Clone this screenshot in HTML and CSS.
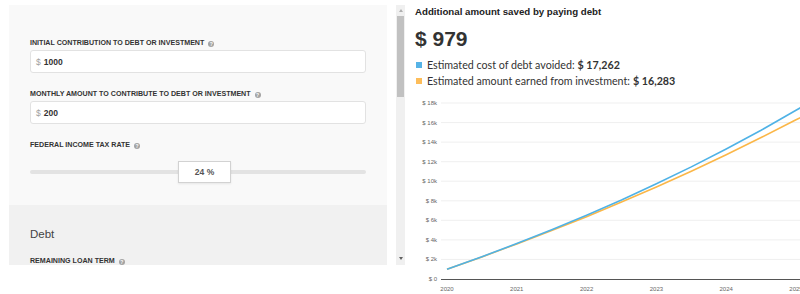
FILE: index.html
```html
<!DOCTYPE html>
<html>
  <head>
    <meta charset="utf-8">
    <meta name="viewport" content="width=device-width, initial-scale=1">
    <title>Pay debt or invest</title>
    <link rel="stylesheet" href="styles.css">
  </head>
  <body>
    <div class="page">
      <div class="inputs">
        <div class="panel">
          <section class="general">
            <label class="label">Initial contribution to debt or investment <span class="help">?</span></label>
            <div class="field"><span class="prefix">$</span><span class="value">1000</span></div>

            <label class="label">Monthly amount to contribute to debt or investment <span class="help">?</span></label>
            <div class="field"><span class="prefix">$</span><span class="value">200</span></div>

            <label class="label">Federal income tax rate <span class="help">?</span></label>
            <div class="slider">
              <div class="handle">24 %</div>
            </div>
          </section>

          <section class="debt">
            <h2>Debt</h2>
            <label class="label">Remaining loan term <span class="help">?</span></label>
          </section>
        </div>

        <div class="scrollbar">
          <span class="arrow up"></span>
          <span class="thumb"></span>
          <span class="arrow down"></span>
        </div>
      </div>

      <div class="results">
        <h1>Additional amount saved by paying debt</h1>
        <p class="total">$ 979</p>
        <ul class="legend">
          <li><span class="swatch debt-color"></span>Estimated cost of debt avoided: <b>$ 17,262</b></li>
          <li><span class="swatch invest-color"></span>Estimated amount earned from investment: <b>$ 16,283</b></li>
        </ul>

        <svg class="chart" width="385" height="204" viewBox="0 0 385 204">
          <g class="grid">
            <line x1="26" x2="385" y1="13" y2="13"/>
            <line x1="26" x2="385" y1="32.6" y2="32.6"/>
            <line x1="26" x2="385" y1="52.1" y2="52.1"/>
            <line x1="26" x2="385" y1="71.7" y2="71.7"/>
            <line x1="26" x2="385" y1="91.2" y2="91.2"/>
            <line x1="26" x2="385" y1="110.8" y2="110.8"/>
            <line x1="26" x2="385" y1="130.3" y2="130.3"/>
            <line x1="26" x2="385" y1="149.9" y2="149.9"/>
            <line x1="26" x2="385" y1="169.4" y2="169.4"/>
          </g>
          <line class="axis" x1="26" x2="385" y1="189.5" y2="189.5"/>

          <g class="y-labels">
            <text x="22" y="15">$ 18k</text>
            <text x="22" y="34.6">$ 16k</text>
            <text x="22" y="54.1">$ 14k</text>
            <text x="22" y="73.7">$ 12k</text>
            <text x="22" y="93.2">$ 10k</text>
            <text x="22" y="112.8">$ 8k</text>
            <text x="22" y="132.3">$ 6k</text>
            <text x="22" y="151.9">$ 4k</text>
            <text x="22" y="171.4">$ 2k</text>
            <text x="22" y="191">$ 0</text>
          </g>

          <g class="x-labels">
            <text x="32" y="201">2020</text>
            <text x="101.8" y="201">2021</text>
            <text x="171.6" y="201">2022</text>
            <text x="241.4" y="201">2023</text>
            <text x="311.2" y="201">2024</text>
            <text x="381" y="201">2025</text>
          </g>

          <polyline class="line invest" points="32,179.2 66.9,166.9 101.8,154 136.7,140.6 171.6,126.7 206.5,112.1 241.4,96.9 276.3,81.2 311.2,64.7 346.1,47.5 381,29.8 388,26.3"/>
          <polyline class="line debt" points="32,179.2 66.9,166.7 101.8,153.6 136.7,139.8 171.6,125.2 206.5,110 241.4,93.8 276.3,76.9 311.2,59 346.1,40.3 381,20.3 388,16.3"/>
        </svg>
      </div>
    </div>
  </body>
</html>
```

FILE: styles.css
```css
body {
  margin: 0;
  font-family: "Liberation Sans", Arial, sans-serif;
  color: #333;
  background: #fff;
}

.page {
  display: flex;
  align-items: flex-start;
  width: 800px;
  height: 294px;
  overflow: hidden;
}

/* left column: scrolling form */

.inputs {
  display: flex;
  margin: 5px 0 0 9px;
  height: 260px;
}

.panel {
  width: 378px;
  height: 260px;
  overflow: hidden;
}

.general {
  box-sizing: border-box;
  height: 200px;
  padding: 33px 21px 0;
  background: #f9f9f9;
}

.debt {
  height: 60px;
  padding: 22px 21px 0;
  box-sizing: border-box;
  background: #f1f1f1;
}

.label {
  display: block;
  font-size: 7.1px;
  font-weight: bold;
  line-height: 10px;
  text-transform: uppercase;
  color: #333;
  margin-bottom: 2px;
}

.help {
  display: inline-block;
  width: 6px;
  height: 6px;
  margin-left: 2px;
  border-radius: 50%;
  background: #a3a3a3;
  color: #fff;
  font-size: 5px;
  line-height: 6px;
  text-align: center;
  vertical-align: -1px;
}

.field {
  display: flex;
  align-items: center;
  gap: 3px;
  box-sizing: border-box;
  height: 23px;
  padding: 0 5px;
  margin-bottom: 16px;
  background: #fff;
  border: 1px solid #e2e2e2;
  border-radius: 3px;
  font-size: 8.5px;
}

.prefix {
  color: #a0a0a0;
}

.value {
  font-weight: bold;
  color: #333;
}

.slider {
  position: relative;
  margin-top: 11px;
  height: 22px;
}

.slider::before {
  content: "";
  position: absolute;
  left: 0;
  right: 0;
  top: 9px;
  height: 4px;
  border-radius: 2px;
  background: #e3e3e3;
}

.handle {
  position: relative;
  box-sizing: border-box;
  width: 53px;
  height: 22px;
  margin-left: 148px;
  background: #fff;
  border: 1px solid #d2d2d2;
  box-shadow: 0 1px 2px rgba(0, 0, 0, 0.08);
  font-size: 8.5px;
  font-weight: bold;
  line-height: 20px;
  text-align: center;
  color: #555;
}

.debt h2 {
  margin: 0 0 15px;
  font-size: 11.5px;
  font-weight: normal;
  line-height: 14px;
  color: #444;
}

.scrollbar {
  display: flex;
  flex-direction: column;
  align-items: center;
  width: 9px;
  height: 260px;
  margin-left: 9px;
  background: #f0f0f0;
}

.thumb {
  width: 7px;
  height: 81px;
  margin-top: 4px;
  background: #c1c1c1;
}

.arrow {
  width: 0;
  height: 0;
  border-left: 2.5px solid transparent;
  border-right: 2.5px solid transparent;
}

.arrow.up {
  margin-top: 4px;
  border-bottom: 3px solid #b0b0b0;
}

.arrow.down {
  margin-top: auto;
  margin-bottom: 5px;
  border-top: 3px solid #606060;
}

/* right column: results */

.results {
  flex: 1;
  padding: 6px 0 0 10px;
  min-width: 0;
}

.results h1 {
  margin: 0;
  font-size: 9.7px;
  line-height: 12px;
  font-weight: bold;
  color: #222;
}

.total {
  margin: 9px 0 0;
  font-size: 21px;
  line-height: 24px;
  font-weight: bold;
  color: #333;
}

.legend {
  margin: 6px 0 0;
  padding: 0;
  list-style: none;
  font-family: Lato, "Liberation Sans", sans-serif;
  font-size: 10.7px;
  line-height: 16px;
  color: #333;
}

.legend li {
  display: flex;
  align-items: center;
  white-space: nowrap;
}

.legend b {
  margin-left: 3px;
}

.swatch {
  width: 6px;
  height: 6px;
  margin: 0 5px 0 1px;
}

.debt-color {
  background: #56b3e6;
}

.invest-color {
  background: #fdbd5a;
}

.chart {
  display: block;
  margin-top: 1px;
  overflow: hidden;
}

.grid line {
  stroke: #efefef;
  stroke-width: 1;
}

.axis {
  stroke: #555;
  stroke-width: 1;
}

.chart text {
  font-family: "Liberation Sans", Arial, sans-serif;
  font-size: 6px;
  fill: #666;
}

.y-labels text {
  text-anchor: end;
}

.x-labels text {
  text-anchor: middle;
}

.line {
  fill: none;
  stroke-width: 1.6;
  stroke-linejoin: round;
}

.line.debt {
  stroke: #4fb2e6;
}

.line.invest {
  stroke: #fbb748;
}
```
